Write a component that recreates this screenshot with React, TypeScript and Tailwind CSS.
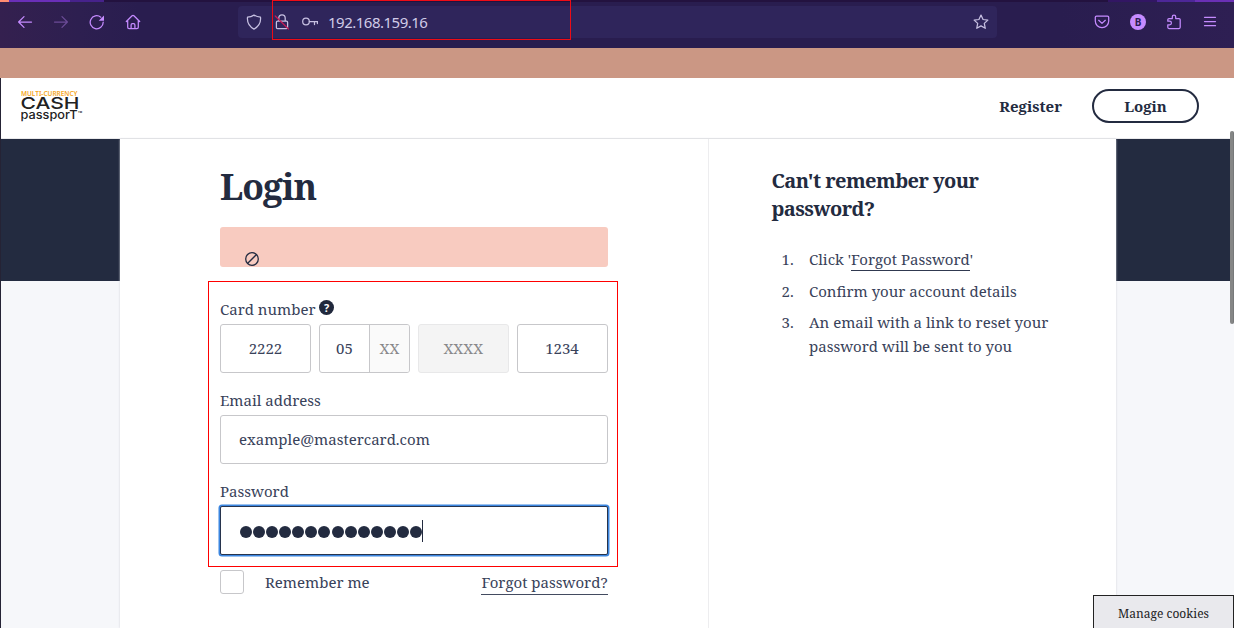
import React from "react";

const serif = "font-['Noto_Serif','Droid_Serif','DejaVu_Serif_Condensed','DejaVu_Serif',serif]";

function Icon({ children, className }: { children: React.ReactNode; className: string }) {
  return (
    <svg viewBox="0 0 16 16" className={`block size-4 shrink-0 ${className}`} fill="none" stroke="currentColor" strokeWidth="1.25" strokeLinecap="round" strokeLinejoin="round">
      {children}
    </svg>
  );
}

function BrowserBar() {
  return (
    <div className="relative h-12 shrink-0 overflow-hidden bg-[linear-gradient(90deg,#34204f_0px,#2d1f50_80px,#291d4f_140px,#291d4f_1060px,#2e1f53_1234px)] text-[#c58bff]">
      <div className="flex h-0.5">
        <div className="w-[9px] bg-[#ff8c72]" />
        <div className="w-[61px] bg-[#6a2fb8]" />
        <div className="w-[34px] bg-[#46228b]" />
        <div className="flex-1 bg-[#23123f]" />
        <div className="w-[49px] bg-[#321663]" />
        <div className="w-[38px] bg-[#4d2798]" />
        <div className="w-[39px] bg-[#6a30b5]" />
      </div>
      <div className="flex h-10 items-center">
        <Icon className="ml-[17px]"><path d="M14.5 8H1.6M7 2.6 1.6 8 7 13.4" /></Icon>
        <Icon className="ml-[20px] opacity-40"><path d="M1.5 8h12.9M9 2.6 14.4 8 9 13.4" /></Icon>
        <Icon className="ml-[20px]">
          <path d="M14.200 8.2A6.500 6.500 0 1 1 11.8 3.200" />
          <path d="M15 1.500v5.300H9.700Z" fill="currentColor" stroke="none" />
        </Icon>
        <Icon className="ml-[20px]">
          <path d="M1.3 7.5 7.1 1.8c.5-.5 1.3-.5 1.8 0l5.8 5.7M2.7 6.4v6.8c0 .8.6 1.4 1.4 1.4h7.8c.8 0 1.4-.6 1.4-1.4V6.4M6.1 14.5v-3.6c0-.7.5-1.2 1.2-1.2h1.4c.7 0 1.2.5 1.2 1.2v3.6" />
        </Icon>
        <div className="ml-[97px] flex h-8 w-[759px] items-center rounded bg-[#2f255b] text-[#c7c0e2]">
          <Icon className="ml-[8px]"><path d="M8 1.1c2 1.2 4 1.9 6.5 2.1.5 4.7-1.3 9-6.5 11.9C2.800 12.200 1 7.900 1.500 3.200 4 3 6 2.300 8 1.100Z" /></Icon>
          <Icon className="ml-[12px]">
            <path d="M4.800 7V4a3.200 3.200 0 0 1 6.400 0V7M3.600 7h8.800c.7 0 1.200.5 1.200 1.200v5.200c0 .7-.5 1.200-1.200 1.200H3.600c-.7 0-1.200-.5-1.200-1.200V8.200C2.400 7.500 2.900 7 3.600 7Z" />
            <path d="m1.200 2 13.300 13" stroke="#c51c58" />
          </Icon>
          <Icon className="ml-[12px]">
            <circle cx="4" cy="7.500" r="3.300" />
            <path d="M7.300 7.500h8.200M12.500 7.500v3M15.400 7.500v2" />
          </Icon>
          <div className="ml-[10px] flex-1 font-['Noto_Sans',sans-serif] text-[15px] leading-5 text-[#d1cbe8]"><span className="tracking-[-0.5px]">192.168.159.16</span></div>
          <Icon className="mr-[8px]"><path d="m8 1.100 2.050 4.400 4.800.6-3.550 3.300.95 4.900L8 11.900l-4.250 2.400.95-4.900-3.550-3.300 4.800-.6Z" /></Icon>
        </div>
        <Icon className="ml-[97px]">
          <path d="M2.500 2h11c.7 0 1.200.5 1.200 1.200V7c0 3.900-3 6.600-6.700 6.600S1.300 10.900 1.300 7V3.200C1.300 2.500 1.800 2 2.500 2Z" />
          <path d="M4.700 6.300 8 9.400l3.300-3.100" />
        </Icon>
        <div className="ml-[20px] flex size-4 items-center justify-center rounded-full bg-[#c58bff] font-['Noto_Sans',sans-serif] text-[10px] leading-none font-bold text-[#291d4f]">B</div>
        <Icon className="ml-[20px]">
          <path d="M6.300 4.500V2.800a1.700 1.700 0 0 1 3.400 0v1.700h3.300c.7 0 1.200.5 1.200 1.200v7.600c0 .7-.5 1.200-1.200 1.200H3c-.7 0-1.200-.5-1.200-1.200v-2.500h1.800a1.800 1.800 0 0 0 0-3.600H1.800V5.700c0-.7.5-1.200 1.200-1.200Z" />
        </Icon>
        <Icon className="ml-[20px]"><path d="M2.500 3.300h11M2.500 7.500h11M2.500 11.700h11" /></Icon>
      </div>
      <div className="absolute top-0 left-[272px] h-10 w-[299px] border border-[#ee0c16]" />
    </div>
  );
}

function Logo() {
  return (
    <svg viewBox="0 0 62 34" className="mb-[2px] block h-[34px] w-[62px]" aria-label="Multi-currency Cash Passport">
      <text x="0" y="5.700" fontSize="7" textLength="56.500" lengthAdjust="spacingAndGlyphs" fill="#f5a623" fontFamily="Noto Sans, sans-serif" fontWeight="600">MULTI-CURRENCY</text>
      <text x="-0.500" y="19" fontSize="16.500" textLength="59" lengthAdjust="spacingAndGlyphs" fill="#222" fontFamily="Inter, sans-serif" fontWeight="500">CASH</text>
      <text x="-0.500" y="28.500" fontSize="12" textLength="57" lengthAdjust="spacingAndGlyphs" fill="#222" fontFamily="Inter, sans-serif" fontWeight="500">passporT</text>
      <text x="57" y="23" fontSize="2.500" fill="#222" fontFamily="Inter, sans-serif">TM</text>
    </svg>
  );
}

const field = "flex h-[49px] items-center rounded-[3px] border border-[#c7c7ca] bg-white";

function LoginForm() {
  return (
    <div className="relative w-[589px] border-r border-[#ededef] pl-[100px]">
      <div className="w-[387.5px]">
        <h1 className="pt-[22px] text-[35.5px] leading-[50px] font-bold tracking-[-1px] text-[#232b40]">Login</h1>
        <div className="mt-[16px] flex h-10 items-end rounded-[3px] bg-[#f8cbc0] pb-[1px] pl-[25px] text-[#232b40]">
          <svg viewBox="0 0 14 14" className="block size-[14px]" fill="none" stroke="currentColor" strokeWidth="1.300"><circle cx="7" cy="7" r="6.300" /><path d="m2.500 11.500 9-9" /></svg>
        </div>
        <div className="mt-[31px] flex h-[26px] items-start leading-[22px]">
          <span>Card number</span>
          <span className="mt-[2px] ml-[3.5px] flex size-[15px] items-center justify-center rounded-full bg-[#20283c] font-['Noto_Sans',sans-serif] text-[11px] leading-none font-bold text-white">?</span>
        </div>
        <div className="flex gap-2">
          <div className={`${field} w-[91px] justify-center`}>2222</div>
          <div className={`${field} w-[91px] overflow-hidden`}>
            <div className="w-[49px] text-center">05</div>
            <div className="flex h-full flex-1 items-center justify-center border-l border-[#c7c7ca] bg-[#fafafa] text-[#88888a]">XX</div>
          </div>
          <div className="flex h-[49px] w-[90.5px] items-center justify-center rounded-[3px] border border-[#e8e8e9] bg-[#f4f4f4] text-[#88888a]">XXXX</div>
          <div className={`${field} w-[91px] justify-center`}>1234</div>
        </div>
        <div className="mt-[16px] h-[26px] leading-[22px]">Email address</div>
        <div className={`${field} pl-[18px]`}>example@mastercard.com</div>
        <div className="mt-[16px] h-[26px] leading-[22px]">Password</div>
        <div className="flex h-[49px] items-center rounded-[2px] border border-[#27344d] bg-white pl-[19px] shadow-[0_0_0_1.5px_#3b86e0]">
          <div className="flex gap-[1px] pt-[3px]">
            {Array.from({ length: 14 }, (_, i) => (
              <span key={i} className="mr-[0.080px] size-[12px] rounded-full bg-[#232b40]" />
            ))}
          </div>
          <div className="h-[22px] w-px bg-[#232b40]" />
        </div>
        <div className="mt-[15px] flex items-start">
          <div className="size-[24px] rounded-[3px] border border-[#c7c7ca]" />
          <span className="ml-[21px] leading-[25px]">Remember me</span>
          <span className="ml-auto h-[25px] border-b border-[#434b60] leading-[25px]">Forgot password?</span>
        </div>
      </div>
      <div className="absolute top-[142px] left-[88px] h-[286px] w-[410px] border border-[#ff0000]" />
    </div>
  );
}

function Help() {
  return (
    <aside className="pt-[28px] pl-[62.5px]">
      <h2 className="w-[270px] text-[20px] leading-[28px] font-bold tracking-[-0.56px] text-[#232b40]">Can't remember your password?</h2>
      <ol className="mt-[24px] ml-[10px] flex w-[280px] flex-col gap-[8px] leading-6">
        <li className="flex"><span className="w-[27.500px] shrink-0">1.</span><span>Click '<span className="inline-block h-[24px] border-b border-[#303950]">Forgot Password</span>'</span></li>
        <li className="flex"><span className="w-[27.500px] shrink-0">2.</span><span>Confirm your account details</span></li>
        <li className="-mt-px flex"><span className="w-[27.500px] shrink-0">3.</span><span>An email with a link to reset your password will be sent to you</span></li>
      </ol>
    </aside>
  );
}

export default function App() {
  return (
    <div className={`relative flex h-[628px] w-[1234px] flex-col overflow-hidden bg-[#f6f7fa] text-[15px] text-[#39425a] ${serif}`}>
      <BrowserBar />
      <div className="h-[30px] shrink-0 bg-[#cb9784]" />
      <div className="flex flex-1 flex-col border-l border-[#252335]">
        <header className="flex h-[61px] shrink-0 items-center border-b border-[#e9e9eb] bg-white pl-[20px] font-bold text-[#232b40]">
          <Logo />
          <span className="ml-auto pb-[4px]">Register</span>
          <span className="mr-[35px] mb-[4px] ml-[30px] flex h-[34px] w-[107px] items-center justify-center rounded-full border-2 border-[#232b40]">Login</span>
        </header>
        <main className="flex flex-1 justify-start bg-[linear-gradient(#232b40_142px,#f6f7fa_142px)] pl-[119px]">
          <div className="flex w-[996px] bg-white shadow-[0_0_2px_#cfd2da]">
            <LoginForm />
            <Help />
          </div>
        </main>
      </div>
      <div className="absolute top-[131px] right-0 h-[193px] w-[4px] rounded-full border-r border-[#77797a] bg-[#858686]" />
      <div className="absolute right-0 bottom-0 flex h-[33px] w-[141px] items-center justify-center border border-b-0 border-[#222] bg-[#e9e9ed] pt-[4px] text-[12px] text-[#222]">Manage cookies</div>
    </div>
  );
}
